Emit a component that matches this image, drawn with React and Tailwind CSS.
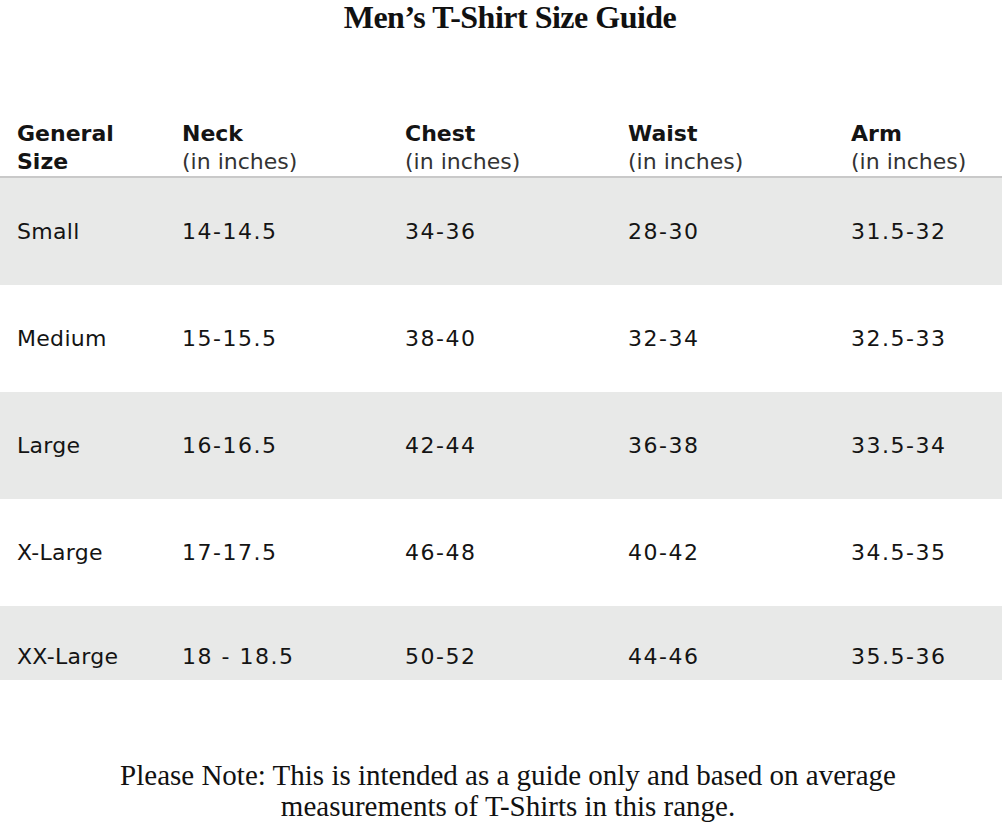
import React from "react";

const rows = [
  ["Small", "14-14.5", "34-36", "28-30", "31.5-32"],
  ["Medium", "15-15.5", "38-40", "32-34", "32.5-33"],
  ["Large", "16-16.5", "42-44", "36-38", "33.5-34"],
  ["X-Large", "17-17.5", "46-48", "40-42", "34.5-35"],
  ["XX-Large", "18 - 18.5", "50-52", "44-46", "35.5-36"],
];

const heads = [
  ["General", "Size"],
  ["Neck", "(in inches)"],
  ["Chest", "(in inches)"],
  ["Waist", "(in inches)"],
  ["Arm", "(in inches)"],
];

function Cells({ cells }) {
  return (
    <>
      {cells.map((c, i) => (
        <div
          key={i}
          className={
            i === 0
              ? "w-[165px] shrink-0 tracking-[0.3px]"
              : "w-[223px] shrink-0 tracking-[1.5px]"
          }
        >
          {c}
        </div>
      ))}
    </>
  );
}

export default function App() {
  return (
    <div className="w-[1002px] h-[827px] bg-white overflow-hidden">
      <h1 className="text-center font-['Liberation_Serif',serif] font-bold text-[32px] leading-[34px] tracking-[-0.5px] text-[#111] pl-[18px]">
        Men’s T-Shirt Size Guide
      </h1>

      <div className="mt-[86px] font-['DejaVu_Sans',sans-serif] text-[22px] leading-[28px] text-[#141414]">
        <div className="flex pl-[17px] border-b-2 border-[#c9c9c9]">
          {heads.map((h, i) => (
            <div key={i} className={i === 0 ? "w-[165px] shrink-0" : "w-[223px] shrink-0"}>
              <div className="font-bold">{h[0]}</div>
              <div className={i === 0 ? "font-bold" : "text-[#333]"}>{h[1]}</div>
            </div>
          ))}
        </div>

        {rows.map((r, i) => {
          const last = i === rows.length - 1;
          return (
            <div
              key={r[0]}
              className={
                "flex pl-[17px] " +
                (i % 2 === 0 ? "bg-[#e8e9e8] " : "bg-white ") +
                (last ? "h-[74px] items-start pt-[37px]" : "h-[107px] items-center")
              }
            >
              <Cells cells={r} />
            </div>
          );
        })}
      </div>

      <p className="mt-[80px] text-center font-['Liberation_Serif',serif] text-[29px] leading-[31px] text-[#111] pl-[14px]">
        Please Note: This is intended as a guide only and based on average
        <br />
        measurements of T-Shirts in this range.
      </p>
    </div>
  );
}
